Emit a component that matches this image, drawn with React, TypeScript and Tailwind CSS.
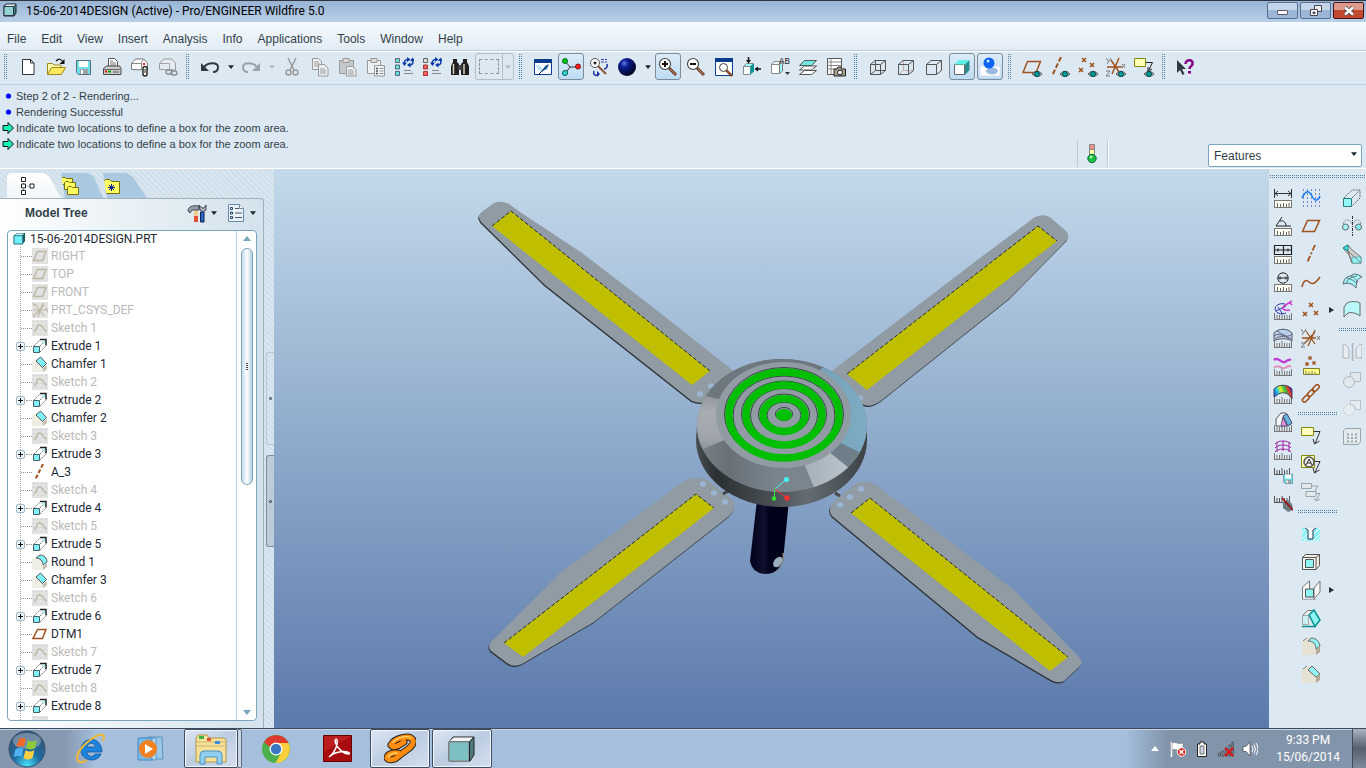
import React from "react";

type Art = React.ReactNode;

const INK = "#555555";
const RUST = "#a0521c";

const Eye = () => (
  <g>
    <path d="M10 17q5-5.500 10 0q-5 5-10 0z" fill="#c8c8c8" stroke="#555" strokeWidth="1" />
    <circle cx="15" cy="17" r="2.500" fill="#00a0a0" stroke="#064848" strokeWidth="1" />
  </g>
);

const Ruler = () => (
  <path d="M1.500 19v-6M4 19v-4M6.500 19v-4M9 19v-6M11.500 19v-4M14 19v-4M16.500 19v-4M18.500 19v-6M1 19.500h18" stroke="#777" fill="none" />
);

const RulerBox = () => (
  <g>
    <rect x="1.500" y="12.500" width="17" height="7" fill="#fffff4" stroke="#777" />
    <path d="M4.500 19v-4M7.500 19v-3M10.500 19v-4M13.500 19v-3M16 19v-4" stroke="#666" fill="none" />
  </g>
);

const Cross = ({ x, y, c = RUST, s = 2 }: { x: number; y: number; c?: string; s?: number }) => (
  <path d={`M${x - s} ${y - s}l${2 * s} ${2 * s}M${x + s} ${y - s}l${-2 * s} ${2 * s}`} stroke={c} strokeWidth="1.500" />
);

const Floppy = ({ t = "" }: { t?: string }) => (
  <g transform={t}>
    <path d="M2.500 3.500h14v14h-12l-2-2z" fill="#6fe0ea" stroke="#557078" />
    <rect x="5" y="4" width="9" height="6" fill="#fff" />
    <rect x="6" y="12" width="8" height="5" fill="#9aa4a8" />
    <rect x="7" y="13" width="2" height="4" fill="#fff" />
  </g>
);

const ListArt = ({ c }: { c: string }) => (
  <g>
    <path d="M1.500 1.500h4v4h-4z" fill={c === "r" ? "#ddd" : "#60e0e0"} stroke="#666" />
    <path d="M1.500 8h4v4h-4zM1.500 14.500h4v4h-4z" fill={c === "r" ? "#ff5c5c" : "#60e0e0"} stroke={c === "r" ? "#a33" : "#567"} />
    <path d="M10.500 7.500c-1-3 1-5 3-5M18.500 3c1 3 0 5-2.500 5" stroke="#0a3aa8" strokeWidth="1.500" fill="none" />
    <path d="M13 0l3.500 2.500-3.500 2.500zM8 5.500h5l-2.500 3.500zM16.500 5.500v5l-3.500-2.500zM16 4h5l-2.500-3.500z" fill="#0a3aa8" />
    <path d="M10 13.500h7M10 16.500h9" stroke="#8a8a8a" />
  </g>
);

const CubeLines = () => <path d="M2.500 7.500h10v10h-10zM2.500 7.500l4.500-4h10.500v10l-5 4M12.500 7.500l5-4" fill="none" stroke={INK} />;

const Magnifier = ({ sign }: { sign: string }) => (
  <g>
    <path d="M11 11l7 7" stroke="#6b3a24" strokeWidth="3" />
    <path d="M12 12l5.500 5.500" stroke="#d09070" strokeWidth="1" />
    <circle cx="7" cy="7" r="5.500" fill="#fff" stroke="#444" strokeWidth="1.200" />
    <path d={sign} stroke="#111" strokeWidth="2" />
  </g>
);

const art: Record<string, Art> = {
  new: <path d="M4.500 2.500h8l3.500 3.500v11.500h-11.500zM12.500 2.500v3.500h3.500" fill="#fff" stroke="#333" />,
  open: (
    <g>
      <path d="M1.500 17.500v-11h5l1.500 1.500h7v3" fill="#ffffb0" stroke="#a08820" />
      <path d="M1.500 17.500l4-7h14l-4 7z" fill="#ffe860" stroke="#a08820" />
      <path d="M10 4c3-3 5-2 7 1" stroke="#111" fill="none" strokeWidth="1.200" />
      <path d="M18.500 2v5h-5z" fill="#111" />
    </g>
  ),
  save: <Floppy />,
  print: (
    <g>
      <path d="M6.500 9.500v-8h6l3 3v5z" fill="#fff" stroke="#555" />
      <path d="M8 4h3M8 6h6M8 8h6" stroke="#777" />
      <path d="M1.500 11.500l3-2.500h13l1.500 2.500v6h-17.500z" fill="#ccc" stroke="#444" />
      <path d="M2 12.500h16" stroke="#666" />
      <path d="M3 14.500h2" stroke="#e00" strokeWidth="2" />
      <path d="M6 14.500h3" stroke="#0a0" strokeWidth="2" />
      <path d="M11 15h6" stroke="#555" />
    </g>
  ),
  mail: (
    <g>
      <path d="M1.500 12.500v-6l4-4.500h8l4 4v7z" fill="#fff" stroke="#777" />
      <path d="M1.500 6.500h10v6M11.500 6.500c0-3 2-4 3-4" stroke="#888" fill="none" />
      <path d="M13 6h2v2h-2z" fill="#e22" />
      <rect x="13" y="9.500" width="4" height="9.500" rx="2" fill="#fff" stroke="#222" strokeWidth="1.400" />
      <path d="M15 12v4" stroke="#222" />
    </g>
  ),
  maillink: (
    <g opacity="0.5">
      <path d="M1.500 12.500v-6l4-4.500h8l4 4v7z" fill="#eee" stroke="#555" />
      <path d="M1.500 6.500h10v6" stroke="#666" fill="none" />
      <rect x="8" y="13" width="6" height="4" rx="2" fill="none" stroke="#333" strokeWidth="1.300" />
      <rect x="13" y="14" width="6" height="4" rx="2" fill="none" stroke="#333" strokeWidth="1.300" />
    </g>
  ),
  undo: (
    <g>
      <path d="M4 10c4-5 14-5 14 0c0 3-2 5-5 5" fill="none" stroke="#2d3a44" strokeWidth="2" />
      <path d="M1 6v8h8z" fill="#2d3a44" />
    </g>
  ),
  redo: (
    <g>
      <path d="M16 10c-4-5-14-5-14 0c0 3 2 5 5 5" fill="none" stroke="#98a4ac" strokeWidth="2" />
      <path d="M19 6v8h-8z" fill="#98a4ac" />
    </g>
  ),
  cut: (
    <g fill="none" stroke="#999" strokeWidth="1.500">
      <path d="M6 1l6 12M14 1l-6 12" />
      <circle cx="6.500" cy="15.500" r="2.500" />
      <circle cx="13.500" cy="15.500" r="2.500" />
    </g>
  ),
  copy: (
    <g fill="#eef1f3" stroke="#999">
      <path d="M2.500 1.500h6l3 3v8h-9z" />
      <path d="M4 5h5M4 7h6M4 9h6" />
      <path d="M8.500 7.500h6l3.500 3.500v8h-9.500z" />
      <path d="M10 12h5M10 14h6M10 16h6" />
    </g>
  ),
  paste: (
    <g stroke="#999">
      <path d="M1.500 3.500h14v13h-14z" fill="#c4c9cc" />
      <path d="M5 1.500h6v4h-6z" fill="#ddd" />
      <path d="M8.500 9.500h6l3.500 3v6.500h-9.500z" fill="#eef1f3" />
      <path d="M10 13h5M10 15h6M10 17h6" />
    </g>
  ),
  pastespecial: (
    <g stroke="#999">
      <path d="M1.500 3.500h13v13h-13z" fill="#eef1f3" />
      <path d="M5 1.500h6v4h-6z" fill="#ddd" />
      <path d="M8.500 8.500h10v10.500h-10z" fill="#eef1f3" />
      <path d="M10 11.500h2M10 14h2M10 16.500h2" stroke="#555" strokeWidth="1.500" />
      <path d="M13.500 11.500h4M13.500 14h4M13.500 16.500h4" />
    </g>
  ),
  regen: <ListArt c="c" />,
  regenred: <ListArt c="r" />,
  find: (
    <g>
      <path d="M3 2h4v3l2 2v11h-8v-9l2-4zM13 2h4v3l2 4v9h-8v-11l2-2z" fill="#222" />
      <path d="M8 8h4v5h-4z" fill="#444" />
      <path d="M3.500 7v10M14 7v10" stroke="#d8d4c0" strokeWidth="1.500" />
    </g>
  ),
  sketchview: (
    <g>
      <path d="M1.500 2.500h17v15h-17z" fill="#fff" stroke="#0c3c8c" />
      <path d="M1 2h18v4h-18z" fill="#0c3c8c" />
      <path d="M3 8c5 0 7 3 7 8-2-1-6-4-7-8z" fill="#b8e4f6" />
      <path d="M8 15l4-6 4-2-2 5z" fill="#2a78d0" />
      <path d="M6 17l9-9" stroke="#123" />
    </g>
  ),
  spin: (
    <g>
      <path d="M4 4l5 6h7M9 10l-5 7" stroke="#333" fill="none" />
      <circle cx="4" cy="4" r="2.500" fill="#0c0" stroke="#063" />
      <circle cx="17" cy="9.500" r="2.500" fill="#f22" stroke="#811" />
      <circle cx="4" cy="16" r="2.500" fill="#3dd" stroke="#055" />
    </g>
  ),
  orient: (
    <g>
      <circle cx="6" cy="6" r="4.500" fill="#fff" stroke="#555" />
      <circle cx="6" cy="6" r="1.500" fill="#222" />
      <path d="M9 9l8 8" stroke="#8a5236" strokeWidth="2" />
      <path d="M12 2.500h6M12 5h6" stroke="#2838a8" strokeDasharray="3 1" />
      <path d="M18 7c1 3-1 5-3 5M5 14c-1 3 0 5 4 4" stroke="#1a2a98" strokeWidth="1.500" fill="none" />
      <path d="M8 14v6l3-3z" fill="#1a2a98" />
    </g>
  ),
  sphere: <circle cx="10" cy="10" r="9" fill="url(#navyball)" />,
  zoomin: <Magnifier sign="M7 4v6M4 7h6" />,
  zoomout: <Magnifier sign="M4 7h6" />,
  refit: (
    <g>
      <path d="M1.500 1.500h17v17h-17z" fill="#fff" stroke="#0c3c8c" />
      <path d="M1 1h18v4h-18z" fill="#0c3c8c" />
      <path d="M12 13l6 6" stroke="#8a4a2c" strokeWidth="2.500" />
      <circle cx="9.500" cy="10.500" r="4" fill="#fff" stroke="#444" />
    </g>
  ),
  reorient: (
    <g>
      <path d="M1.500 9.500h7v8h-7z" fill="#fff" stroke="#888" />
      <path d="M1.500 9.500l3-3h7l-3 3z" fill="#9ff" stroke="#888" />
      <path d="M8.500 9.500l3.500-3v8l-3.500 3z" fill="#099" />
      <path d="M6.500 0v4M19 12h-4" stroke="#111" strokeWidth="1.500" />
      <path d="M4 3h5l-2.500 3.500zM16 9.500v5l-3.500-2.500z" fill="#111" />
    </g>
  ),
  saved: (
    <g>
      <path d="M1.500 7.500h8v9h-8z" fill="#fff" stroke="#888" />
      <path d="M1.500 7.500l2.500-3h7l-1.500 3z" fill="#e8f8ff" stroke="#888" />
      <path d="M9.500 7.500l3-2.500v9l-3 2.500z" fill="#9ff" stroke="#777" />
      <text x="9" y="7" fontSize="9" fontFamily="Liberation Mono" fill="#222">AB</text>
      <path d="M15 15h5l-2.500 3z" fill="#333" />
    </g>
  ),
  layers: (
    <g stroke="#555">
      <path d="M1.500 17.500l5-4h12l-5 4z" fill="#fff" />
      <path d="M1.500 13l5-4h12l-5 4z" fill="#fff" />
      <path d="M1.500 8.500l5-5h12l-5 5z" fill="#70e8e0" />
    </g>
  ),
  viewmgr: (
    <g>
      <path d="M1.500 1.500h14v16h-14z" fill="#fff" stroke="#555" />
      <path d="M1.500 5h14M1.500 8.500h14M1.500 12h14M5 1.500v16" stroke="#888" />
      <path d="M8 12h3l1-2h3l1 2h3.500v7h-11.500z" fill="#aaa390" stroke="#222" />
      <circle cx="14" cy="15.500" r="2.500" fill="#eee" stroke="#111" />
    </g>
  ),
  wire: (
    <g>
      <CubeLines />
      <path d="M7.500 3.500v10h10M7.500 13.500l-5 4" stroke={INK} fill="none" />
    </g>
  ),
  hidden: (
    <g>
      <path d="M7.500 3.500v10h10M7.500 13.500l-5 4" stroke="#c6b0b0" fill="none" />
      <CubeLines />
    </g>
  ),
  nohidden: <CubeLines />,
  shade: (
    <g>
      <path d="M2.500 7.500h10v10h-10z" fill="#fff" stroke="#666" />
      <path d="M2.500 7.500l4-4.500h11l-4 4.500z" fill="#5ff0e8" />
      <path d="M13 7.500l4.500-4.500v10l-4.500 5z" fill="#2a8c8c" />
    </g>
  ),
  enhanced: (
    <g>
      <path d="M0 9h20v10h-20z" fill="#fff" stroke="#dde" />
      <ellipse cx="12" cy="14" rx="6" ry="3.500" fill="#9ab8e0" />
      <circle cx="9" cy="6" r="5.500" fill="#0a64f0" />
      <circle cx="8" cy="4" r="1.500" fill="#d0e8ff" />
    </g>
  ),
  dplane: (
    <g>
      <path d="M5.500 4.500h13l-4.500 11h-13z" fill="none" stroke={RUST} strokeWidth="1.500" />
      <Eye />
    </g>
  ),
  daxis: (
    <g>
      <path d="M11 0l-9 19" stroke={RUST} strokeWidth="2" strokeDasharray="5 2" />
      <Eye />
    </g>
  ),
  dpoint: (
    <g>
      <Cross x={6} y={3} />
      <Cross x={14} y={8} />
      <Cross x={3} y={13} />
      <Eye />
    </g>
  ),
  dcsys: (
    <g>
      <path d="M13 1l-7 16M1 10h15M5 3l8 12" stroke={RUST} strokeWidth="1.500" />
      <path d="M0 1l2 3M5 1l-4 6M0 14h4l-4 5h4M16 7l3 4M19 7l-3 4" stroke="#777" fill="none" />
      <Eye />
    </g>
  ),
  dnote: (
    <g>
      <path d="M.5 1.500h11v8h-11z" fill="#ffffb8" stroke="#888800" />
      <path d="M12 5.500h6.500l-4 8M14 10v4l4-2" stroke="#222" fill="none" />
      <Eye />
    </g>
  ),
  help: (
    <g>
      <path d="M1 3v13l3-3 2.500 5 2-1-2.500-5h4z" fill="#2d3a44" />
      <path d="M9.500 7c0-5 8-5 7 0c0 2-3 2.500-3 5" stroke="#850085" strokeWidth="2.500" fill="none" />
      <path d="M12 14h3v2.500h-3z" fill="#850085" />
    </g>
  ),
  mdist: (
    <g>
      <path d="M1.500 1v9M18.500 1v9M2 5.500h16M5 3l-3 2.500 3 2.500M15 3l3 2.500-3 2.500" stroke="#333" fill="none" />
      <RulerBox />
    </g>
  ),
  mangle: (
    <g>
      <path d="M9 1l-6 9h15M7 5c4-1 6 2 6 5" stroke="#222" fill="none" />
      <RulerBox />
    </g>
  ),
  marea: (
    <g>
      <path d="M1.500 1.500h17v9h-17zM2 6h17M10.500 1v10M5 4.500v3M15 4.500v3" stroke="#222" fill="none" strokeWidth="1.200" />
      <RulerBox />
    </g>
  ),
  mdiam: (
    <g>
      <circle cx="10" cy="6" r="5.200" fill="none" stroke="#222" />
      <path d="M5 6h10M7 4.500v3M13 4.500v3" stroke="#222" />
      <RulerBox />
    </g>
  ),
  manalysis: (
    <g>
      <Ruler />
      <path d="M12 4c-9-2-13 6-7 9c3 1 6 1 8 0M3 11l10-5M5 7l4 6" stroke="#2838a8" fill="none" />
      <path d="M19 1l-8 5c-3 2-1 5 6 4M16 2l3 3" stroke="#d03ad0" fill="none" strokeWidth="1.500" />
    </g>
  ),
  msurface: (
    <g>
      <Ruler />
      <path d="M1 13v-8c4-5 14-5 18 0v8c-4-3-14-3-18 0z" fill="#b8d0ec" stroke="#556" />
      <path d="M1 8c6-5 12 4 18-2M4 3c5 4 10 4 12 9M2 11c5-4 12-3 16 0" stroke="#667" fill="none" />
    </g>
  ),
  mcurve: (
    <g>
      <Ruler />
      <path d="M1 4c4-4 8 4 11 2s4-3 6-2" stroke="#c040d8" strokeWidth="2.500" fill="none" />
      <path d="M1 12c4-5 8 2 11 0s4-3 6-1" stroke="#e090b8" strokeWidth="2" fill="none" />
    </g>
  ),
  mcolor: (
    <g>
      <Ruler />
      <path d="M1 13v-8c4-5 14-5 18 0v10l-3-4c-4-3-8-3-12 0z" fill="url(#rainbow)" stroke="#445" />
    </g>
  ),
  mdraft: (
    <g>
      <Ruler />
      <path d="M3 14v-7l5-6h5l5 11-4 2z" fill="#f4f6f8" stroke="#556" />
      <path d="M8 14l2-9 4 9z" fill="#f090e8" stroke="#556" />
      <path d="M10 4l4-2 5 9-4 3z" fill="#68b8e0" stroke="#447" />
    </g>
  ),
  mmesh: (
    <g>
      <Ruler />
      <path d="M2 4c3-4 13-4 16 0M2 8c3-4 13-4 16 0M2 12c3-4 13-4 16 0M4 2v10M16 2v10M10 1v10" stroke="#a020a0" fill="none" />
    </g>
  ),
  msave: (
    <g>
      <path d="M1.500 6V0M4 6V2M6.500 6V2M9 6V0M11.500 6V2M14 6V2M16.500 6V0M1 6.500h9" stroke="#555" />
      <Floppy t="translate(9 4) scale(.65)" />
    </g>
  ),
  mdelete: (
    <g>
      <path d="M1.500 6V0M4 6V2M6.500 6V2M9 6V0M11.500 6V2M14 6V2M16.500 6V0M1 6.500h9" stroke="#555" />
      <path d="M10 6l5-2 4 4 1 6-5 2-5-4z" fill="#6a7a80" />
      <path d="M9 2l11 12" stroke="#a00000" strokeWidth="1.500" />
    </g>
  ),
  sketch: (
    <g>
      <path d="M2 2h17M2 6h17M2 10h17M2 14h17M2 18h17" stroke="#1a2a98" strokeDasharray="1 3" />
      <path d="M1 10c4-8 7-8 10-2s6 5 8 0" stroke="#1478f0" strokeWidth="1.500" fill="none" />
    </g>
  ),
  plane: <path d="M6.500 4.500h12l-5 11h-12z" fill="none" stroke={RUST} strokeWidth="1.500" />,
  axis: <path d="M14 1l-8 18" stroke={RUST} strokeWidth="1.800" strokeDasharray="6 2 2 2" />,
  curve: <path d="M1 15c1-6 4-8 7-5s6 2 11-5" stroke={RUST} strokeWidth="1.500" fill="none" />,
  points: (
    <g>
      <Cross x={10} y={5} />
      <Cross x={4} y={14} />
      <Cross x={15} y={13} />
    </g>
  ),
  csys: (
    <g>
      <path d="M14 2l-7 16M1 10h14M5 3l9 13M3 16l11-12" stroke={RUST} strokeWidth="1.300" />
      <path d="M0 1l2 3M5 1l-4 6M0 15h4l-4 4h4M16 8l3 4M19 8l-3 4" stroke="#777" fill="none" />
    </g>
  ),
  analysis: (
    <g>
      <Cross x={9} y={2} s={1.5} />
      <Cross x={6} y={8} s={1.5} />
      <Cross x={13} y={7} s={1.5} />
      <path d="M2.500 12.500h16v6h-16z" fill="#ffff80" stroke="#808030" />
      <path d="M5 19v-4M8 19v-3M11 19v-4M14 19v-3" stroke="#777" />
    </g>
  ),
  link: (
    <g fill="none" stroke={RUST} strokeWidth="1.500">
      <rect x="-3.500" y="-2" width="8" height="4" rx="2" transform="translate(14.500 4.500) rotate(-45)" />
      <rect x="-3.500" y="-2" width="8" height="4" rx="2" transform="translate(9.500 9.500) rotate(-45)" />
      <rect x="-3.500" y="-2" width="8" height="4" rx="2" transform="translate(4.500 15) rotate(-45)" />
    </g>
  ),
  note: (
    <g>
      <path d="M.5 1.500h12v8h-12z" fill="#ffffc0" stroke="#888800" />
      <path d="M13 5.500h6l-5 12M12 13l1.500 5 5-3" stroke="#333" fill="none" />
    </g>
  ),
  symbol: (
    <g>
      <path d="M.5 1.500h13v12h-13z" fill="#ffffc0" stroke="#888800" />
      <circle cx="8" cy="8" r="5" fill="#eee" stroke="#555" strokeWidth="1.500" />
      <path d="M5 11l3-6 3 6M6 9h4" stroke="#333" fill="none" />
      <path d="M14 7.500h5l-5 11M12 14l1.500 5 5-3" stroke="#333" fill="none" />
    </g>
  ),
  notes2: (
    <g fill="none" stroke="#9aa6ae">
      <path d="M.5 1.500h10v5h-10zM5 9.500h10v5h-10z" fill="#e2e8ec" />
      <path d="M11 4h6l-3 5M15 11.500h4l-4 7M13 16l2 3 4-2" />
    </g>
  ),
  hole: (
    <g>
      <path d="M1 4h18v13h-18z" fill="#8ff4f6" />
      <path d="M1 9l5-5M1 15l6-6M12 17l7-7M13 10l6-6M3 17l4-4M16 17l3-3" stroke="#fff" />
      <path d="M4 4l3 2v9h5v-9l3-2z" fill="#f4f8fa" />
      <path d="M4 4l3 2v9h5v-9l3-2" fill="none" stroke="#26365a" />
    </g>
  ),
  shell: (
    <g stroke="#555">
      <path d="M1.500 5.500l3-3h14v11l-3.500 4h-13.500z" fill="#f0ece0" />
      <path d="M1.500 5.500h13.500v12h-13.500zM15 5.500l3.500-3" fill="#f8f6f0" />
      <path d="M4.500 7.500h8v8h-8z" fill="#8ff4f4" />
    </g>
  ),
  rib: (
    <g>
      <path d="M1.500 19v-12l7-6v12M13 19v-11l6-7v11z" fill="#f8f8f4" stroke="#777" />
      <path d="M4.500 9h8v8h-8z" fill="#8ff4f4" stroke="#555" />
      <path d="M1.500 19.500h13" stroke="#777" strokeDasharray="1 1" />
    </g>
  ),
  draft: (
    <g>
      <path d="M1.500 7.500l5-5h6l-5 5z" fill="#eee" stroke="#777" />
      <path d="M1.500 7.500h6v9h-6z" fill="#c8f0f0" stroke="#aaa" />
      <path d="M8 7l5-5 6 10-5 6.500z" fill="#8ff4f4" stroke="#089090" strokeWidth="1.500" />
      <path d="M1 18.500h13" stroke="#089090" strokeWidth="1.500" />
    </g>
  ),
  round: (
    <g>
      <path d="M1 6l5-4h6l7 8v6l-4 3h-14z" fill="#e6e2d4" />
      <path d="M7 5l3-3c5 0 8 3 9 8l-4 3c0-5-3-8-8-8z" fill="#90f4f4" stroke="#666" />
      <path d="M15 13l4-3v6l-4 3z" fill="#b0aa98" />
      <path d="M2 5l4-3" stroke="#888" />
    </g>
  ),
  chamfer: (
    <g>
      <path d="M1 6l5-4h5l8 8v6l-4 3h-14z" fill="#e6e2d4" />
      <path d="M7 6l4-4 8 8-4 3z" fill="#90f4f4" stroke="#666" />
      <path d="M15 13l4-3v6l-4 3z" fill="#b0aa98" />
      <path d="M2 5l4-3" stroke="#888" />
    </g>
  ),
  extrude: (
    <g>
      <path d="M1.500 10.500h8v8h-8z" fill="#90f8f8" stroke="#2a7a7a" />
      <path d="M2 10l8-8h8v8l-8 8M10 10l8-8" stroke="#666" strokeDasharray="2 1" fill="none" />
    </g>
  ),
  revolve: (
    <g>
      <path d="M10.500 0v20" stroke="#333" strokeDasharray="3 1 1 1" />
      <circle cx="3.500" cy="11" r="3" fill="#a0f8f8" stroke="#666" />
      <circle cx="16.500" cy="11" r="3" fill="#80f0f0" stroke="#666" />
      <path d="M1 8c2-6 7-5 9 0M19 8c-2-6-6-5-8 0" stroke="#888" fill="none" strokeDasharray="2 1" />
    </g>
  ),
  blend: (
    <g>
      <path d="M1 4l5-3 4 5 9 7v6h-9l-3-8z" fill="#d4d4d0" stroke="#777" />
      <path d="M1 4l5-3v6z" fill="#50e8e8" stroke="#088" />
      <path d="M10 19v-6h9v6z" fill="#90f8f8" stroke="#6aa" />
      <path d="M6 7l4 12M6 7l13 12" stroke="#777" />
    </g>
  ),
  sweep: (
    <g>
      <path d="M1 12c1-5 4-8 8-8l3-2c2 0 6 1 8 3-4 1-6 5-6 11-3-4-8-6-13-4z" fill="#a4f6f6" stroke="#567" />
      <path d="M9 4c4 2 6 4 6 7M5 6c4 1 8 3 10 6M4 12c1-4 4-7 11-8" stroke="#567" fill="none" strokeWidth=".8" />
    </g>
  ),
  boundary: <path d="M2 17v-10l3-4c4-2 9-2 13 0v13c-4-3-8-4-12-3z" fill="#b8f8f8" stroke="#666" />,
  mirror: (
    <g stroke="#aab4ba" fill="#e6ecf0">
      <path d="M10.500 1v18" strokeWidth="1.500" />
      <path d="M1 2c4 1 6 3 6 8v6h-6zM20 2c-4 1-6 3-6 8v6h6z" />
    </g>
  ),
  merge: (
    <g stroke="#b0bac0" fill="#e2e9ee">
      <path d="M8.500 2.500h10v9h-10z" />
      <circle cx="7" cy="12" r="5.500" />
    </g>
  ),
  trim: (
    <g stroke="#b8c2c8" fill="#e6ecf0">
      <circle cx="7" cy="12" r="5.500" stroke="#d2dade" />
      <path d="M8.500 2.500h10v9h-5c0-4-2-5-5-5z" />
    </g>
  ),
  pattern: (
    <g>
      <path d="M1.500 4.500l2-2h15v13l-2 3h-15z" fill="#e4ebef" stroke="#9aa6ae" />
      <path d="M5 8.500h10M5 12h10M5 15.500h10" stroke="#9aa6ae" strokeWidth="2" strokeDasharray="2 2" />
    </g>
  ),
};

function Icon({ name }: { name: string }) {
  return (
    <svg viewBox="0 0 20 20" className="h-5 w-5 shrink-0" aria-hidden="true">
      {art[name]}
    </svg>
  );
}

function Caret({ faint, light }: { faint?: boolean; light?: boolean }) {
  return (
    <svg viewBox="0 0 8 5" className="h-[4px] w-[6px]" aria-hidden="true">
      <path d="M0 0h8l-4 5z" fill={faint ? "#b4bcc2" : light ? "#fff" : "#1c2830"} />
    </svg>
  );
}

function Tool({ name, label, active }: { name: string; label: string; active?: boolean }) {
  return (
    <button
      aria-label={label}
      className={
        active
          ? "mx-px flex h-[27px] w-[26px] items-center justify-center rounded-[3px] border border-[#7c8c9a] bg-gradient-to-b from-[#dcebf7] to-[#bcdcf4]"
          : "flex h-7 w-7 items-center justify-center"
      }
    >
      <Icon name={name} />
    </button>
  );
}

function DropCaret({ label, faint }: { label: string; faint?: boolean }) {
  return (
    <button aria-label={label} className="flex h-7 w-[13px] items-center justify-center">
      <Caret faint={faint} />
    </button>
  );
}

const DOTS = "bg-[linear-gradient(#dce9f3_50%,transparent_50%),linear-gradient(90deg,#dce9f3_50%,#4f7f9f_50%)] bg-[size:2px_2px]";

const Grip = () => (
  <div className="w-[14px] pl-[3px]">
    <div className={`h-[27px] w-[4px] ${DOTS}`} />
  </div>
);

const Rule = () => (
  <div className="h-[14px] self-stretch pt-[3px]">
    <div className={`h-[4px] ${DOTS}`} />
  </div>
);

type ToolDef = [string, string];

const fileTools: ToolDef[] = [["new", "New"], ["open", "Open"], ["save", "Save"], ["print", "Print"], ["mail", "Send as attachment"], ["maillink", "Send as link"]];
const editTools: ToolDef[] = [["cut", "Cut"], ["copy", "Copy"], ["paste", "Paste"], ["pastespecial", "Paste special"], ["regen", "Regenerate"], ["regenred", "Regenerate manager"], ["find", "Find"]];
const viewTools: ToolDef[] = [["zoomin", "Zoom in"], ["zoomout", "Zoom out"], ["refit", "Refit"], ["reorient", "Reorient"], ["saved", "Saved views"], ["layers", "Layers"], ["viewmgr", "View manager"]];
const displayTools: ToolDef[] = [["wire", "Wireframe"], ["hidden", "Hidden line"], ["nohidden", "No hidden"], ["shade", "Shading"], ["enhanced", "Enhanced realism"]];
const datumTools: ToolDef[] = [["dplane", "Plane display"], ["daxis", "Axis display"], ["dpoint", "Point display"], ["dcsys", "Csys display"], ["dnote", "Annotation display"]];

function Toolbar() {
  const row = (t: ToolDef[], active: string[] = []) => t.map(([n, l]) => <Tool key={n} name={n} label={l} active={active.includes(n)} />);
  return (
    <div role="toolbar" className="flex h-[35px] shrink-0 items-center border-y border-[#bccddd] bg-[#dce9f3] pb-[2px] shadow-[inset_0_1px_0_#fff,0_1px_0_#fff]">
      <Grip />
      {row(fileTools)}
      <Grip />
      <Tool name="undo" label="Undo" />
      <DropCaret label="Undo list" />
      <Tool name="redo" label="Redo" />
      <DropCaret label="Redo list" faint />
      {row(editTools)}
      <div className="w-[41px] pl-px">
        <button aria-label="Select box" className="flex h-[27px] w-[39px] items-center rounded-[3px] border border-[#b4bec6]">
          <span className="flex h-full w-[27px] items-center justify-center border-r border-[#b4bec6]">
            <span className="h-[15px] w-5 border border-dashed border-[#8a949c]" />
          </span>
          <span className="flex flex-1 justify-center">
            <Caret faint />
          </span>
        </button>
      </div>
      <Grip />
      <Tool name="sketchview" label="Repaint" />
      <Tool name="spin" label="Spin center" active />
      <Tool name="orient" label="Orient mode" />
      <Tool name="sphere" label="Appearance gallery" />
      <DropCaret label="Appearance list" />
      {row(viewTools, ["zoomin"])}
      <Grip />
      {row(displayTools, ["shade", "enhanced"])}
      <Grip />
      {row(datumTools)}
      <Grip />
      <Tool name="help" label="Context help" />
    </div>
  );
}

const menus = ["File", "Edit", "View", "Insert", "Analysis", "Info", "Applications", "Tools", "Window", "Help"];

function TitleBar() {
  return (
    <header className="flex h-[22px] shrink-0 items-start border-t border-[#2f3440] bg-gradient-to-b from-[#98b4d4] to-[#b9cfe8] pl-[3px] pr-[2px]">
      <svg viewBox="0 0 14 14" className="mt-[2px] h-[14px] w-[14px]" aria-hidden="true">
        <path d="M1 3l2-2h10v9l-2 3h-10z" fill="#3a8080" stroke="#222" />
        <path d="M1 3.500h9.500v9h-9.500z" fill="#90d4d4" stroke="#334" />
        <path d="M2 3l1.500-1.500h9l-2 1.500z" fill="#e8f4f4" />
      </svg>
      <h1 className="flex-1 pl-[9px] font-[Roboto,sans-serif] text-[12px] leading-5 text-black">15-06-2014DESIGN (Active) - Pro/ENGINEER Wildfire 5.0</h1>
      <div className="flex gap-[2px] pt-px">
        <button aria-label="Minimize" className="flex h-[17px] w-[31px] items-center justify-center rounded-[2px] border border-[#5a6f90] bg-gradient-to-b from-[#c4d5ea] from-50% to-[#9cb6d6] to-50%">
          <span className="mt-1 h-[5px] w-[11px] rounded-[1px] border border-[#556] bg-white" />
        </button>
        <button aria-label="Restore" className="flex h-[17px] w-[31px] items-center justify-center rounded-[2px] border border-[#5a6f90] bg-gradient-to-b from-[#c4d5ea] from-50% to-[#9cb6d6] to-50%">
          <svg viewBox="0 0 12 11" className="h-[11px] w-3" aria-hidden="true">
            <path d="M4.500.5h7v6h-7z" fill="#eee" stroke="#445" />
            <path d="M.5 4.500h7v6h-7z" fill="#fff" stroke="#445" />
            <path d="M3 7h2v1.500h-2z" fill="#9cb6d6" stroke="#445" />
          </svg>
        </button>
        <button aria-label="Close" className="flex h-[17px] w-[31px] items-center justify-center rounded-[2px] border border-[#4a1418] bg-gradient-to-b from-[#dd9a8c] from-50% to-[#c04a30] to-50%">
          <svg viewBox="0 0 12 10" className="h-[10px] w-3" aria-hidden="true">
            <path d="M2 1.500l8 7M10 1.500l-8 7" stroke="#445" strokeWidth="4" />
            <path d="M2 1.500l8 7M10 1.500l-8 7" stroke="#fff" strokeWidth="2.500" />
          </svg>
        </button>
      </div>
    </header>
  );
}

function Messages() {
  const lines: [boolean, string][] = [
    [false, "Step 2 of 2 - Rendering..."],
    [false, "Rendering Successful"],
    [true, "Indicate two locations to define a box for the zoom area."],
    [true, "Indicate two locations to define a box for the zoom area."],
  ];
  return (
    <section className="flex h-[84px] shrink-0 border-b border-white bg-[#dce9f3]">
      <ul className="flex-1 pl-[2px] pt-[3px]">
        {lines.map(([arrow, text], i) => (
          <li key={i} className="flex h-4 items-center gap-[2px] text-[11px] text-[#333f48]">
            <svg viewBox="0 0 12 12" className="h-3 w-3 shrink-0" aria-hidden="true">
              {arrow ? <path d="M1 3.500h5v-3l5.500 5.500-5.500 5.500v-3h-5z" fill="#10f0b8" stroke="#111" /> : <circle cx="6.500" cy="6" r="2.600" fill="#0000ff" />}
            </svg>
            {text}
          </li>
        ))}
      </ul>
      <div className="flex items-end gap-[100px] pb-px pr-1">
        <div className="flex h-[26px] w-[31px] items-center justify-center border-x border-[#b9c8d4] pr-px shadow-[1px_0_0_#fff]">
          <svg viewBox="0 0 12 20" className="h-5 w-3" aria-hidden="true">
            <path d="M3.500.5h5v5h-5z" fill="#f09090" stroke="#888" />
            <path d="M3.500 5.500h5v5h-5z" fill="#ffffa0" stroke="#888" />
            <circle cx="6" cy="14.500" r="4.200" fill="#20c040" stroke="#064" />
            <circle cx="5" cy="13" r="1.300" fill="#c0ffc0" />
          </svg>
        </div>
        <div className="relative">
          <select aria-label="Selection filter" className="h-[23px] w-[154px] appearance-none rounded-[2px] border border-[#7ba4bd] bg-white pl-[5px] text-[12px] text-[#333f48]">
            <option>Features</option>
            <option>Geometry</option>
          </select>
          <span className="pointer-events-none absolute right-[5px] top-[9px] flex">
            <Caret />
          </span>
        </div>
      </div>
    </section>
  );
}

type Kind = "plane" | "csys" | "sketch" | "extrude" | "chamfer" | "axis" | "round" | "datum";

const nodes: [Kind, string][] = [
  ["plane", "RIGHT"], ["plane", "TOP"], ["plane", "FRONT"], ["csys", "PRT_CSYS_DEF"], ["sketch", "Sketch 1"],
  ["extrude", "Extrude 1"], ["chamfer", "Chamfer 1"], ["sketch", "Sketch 2"], ["extrude", "Extrude 2"], ["chamfer", "Chamfer 2"],
  ["sketch", "Sketch 3"], ["extrude", "Extrude 3"], ["axis", "A_3"], ["sketch", "Sketch 4"], ["extrude", "Extrude 4"],
  ["sketch", "Sketch 5"], ["extrude", "Extrude 5"], ["round", "Round 1"], ["chamfer", "Chamfer 3"], ["sketch", "Sketch 6"],
  ["extrude", "Extrude 6"], ["datum", "DTM1"], ["sketch", "Sketch 7"], ["extrude", "Extrude 7"], ["sketch", "Sketch 8"],
  ["extrude", "Extrude 8"], ["sketch", ""],
];

const Dots = () => <path d="M1 1.500h15M1 5.500h15M1 9.500h15M1 13.500h15" stroke="#c4c4c4" strokeDasharray="1 3" />;

const nodeArt: Record<Kind, Art> = {
  plane: (
    <g>
      <path d="M0 0h16v16h-16z" fill="#e2e2e2" />
      <path d="M5.500 3.500h8.500l-3.500 9h-9z" fill="none" stroke="#bdb9a4" strokeWidth="1.500" />
    </g>
  ),
  csys: (
    <g>
      <path d="M0 0h16v16h-16z" fill="#e2e2e2" />
      <path d="M11 1l-5 14M1 8h13M3 2l9 12M3 13l9-10M14 6l2 4M1 1l2 3M1 12l2 3" stroke="#bdb9a4" strokeWidth="1.200" />
    </g>
  ),
  sketch: (
    <g>
      <path d="M0 0h16v16h-16z" fill="#e2e2e2" />
      <Dots />
      <path d="M2 12c3-1 2-7 5-7s4 2 5 4 1 2 3 2" fill="none" stroke="#bdb9a4" strokeWidth="1.500" />
    </g>
  ),
  extrude: (
    <g>
      <path d="M1.500 8.500h6v6h-6z" fill="#80f4fa" stroke="#476068" />
      <path d="M2 8l6-6M8 14l6-6M8 8l5-5" stroke="#777" strokeDasharray="2 1" />
      <path d="M8 1.500h6v6" fill="none" stroke="#222" strokeWidth="1.500" />
      <path d="M9 3h4v3z" fill="#a0f0f0" />
    </g>
  ),
  chamfer: (
    <g>
      <path d="M0 5l4-2h4l3 9v4h-11z" fill="#efeee4" />
      <path d="M4 5l4.500-4 6 6.500-4 4z" fill="#80f4fa" stroke="#555" />
      <path d="M11 12l4-3v4l-4 3z" fill="#c4c0b0" />
    </g>
  ),
  axis: <path d="M11 0l-8 16" stroke={RUST} strokeWidth="2" strokeDasharray="4 2" />,
  round: (
    <g>
      <path d="M0 5l4-2h4l3 9v4h-11z" fill="#efeee4" />
      <path d="M4 4l4-3c4 0 7 3 7 7l-4 3c0-4-3-7-7-7z" fill="#80f4fa" stroke="#555" />
      <path d="M11 12l4-3v4l-4 3z" fill="#c4c0b0" />
    </g>
  ),
  datum: <path d="M5.500 3.500h8.500l-3.500 9h-9.500z" fill="none" stroke={RUST} strokeWidth="1.500" />,
};

function TreeNode({ kind, label }: { kind: Kind; label: string }) {
  const hidden = kind === "plane" || kind === "csys" || kind === "sketch";
  const expandable = kind === "extrude";
  return (
    <li className="flex h-[18px] shrink-0 items-center">
      <div className="flex w-6 items-center pl-2">
        {expandable && (
          <button aria-label={`Expand ${label}`} className="flex h-[9px] w-[9px] shrink-0 items-center justify-center rounded-[2px] border border-[#9fb8c8] bg-[#eef5fa]">
            <svg viewBox="0 0 5 5" className="h-[5px] w-[5px]" aria-hidden="true">
              <path d="M0 2.500h5M2.500 0v5" stroke="#111" />
            </svg>
          </button>
        )}
        <span className={expandable ? "ml-px flex-1 border-t border-dotted border-[#909090]" : "ml-[5px] flex-1 border-t border-dotted border-[#909090]"} />
      </div>
      <svg viewBox="0 0 16 16" className="h-4 w-4 shrink-0" aria-hidden="true">
        {nodeArt[kind]}
      </svg>
      <span className={hidden ? "pl-[3px] text-[#b9b9b9]" : "pl-[3px] text-[#1d2a34]"}>{label}</span>
    </li>
  );
}

function ModelTree() {
  return (
    <aside className="flex w-[274px] shrink-0 bg-[repeating-linear-gradient(45deg,#cfe0eb_0px,#cfe0eb_2px,#d9e6ef_2px,#d9e6ef_4px)]">
      <div className="flex min-w-0 flex-1 flex-col">
        <div role="tablist" className="flex h-[29px] shrink-0 items-end pl-[7px]">
          <button role="tab" aria-selected="true" aria-label="Model tree" className="flex h-[25px] w-[54px] items-center bg-gradient-to-b from-white to-[#f1f6fa] pl-[14px] [clip-path:polygon(0_3px,3px_0,36px_0,42px_3px,100%_100%,0_100%)]">
            <svg viewBox="0 0 14 20" className="h-5 w-[14px]" aria-hidden="true">
              <path d="M2.500 1v18M2.500 10h8" stroke="#777" strokeDasharray="1 1" />
              <path d="M.5 1.500h4v4h-4zM.5 8h4v4h-4zM.5 14.500h4v4h-4zM9 8h4v4h-4z" fill="#fff" stroke="#222" />
            </svg>
          </button>
          <button role="tab" aria-selected="false" aria-label="Folder browser" className="flex h-[25px] w-[42px] items-center bg-[#aac9e0] pl-0 [clip-path:polygon(0_0,27px_0,33px_4px,100%_100%,4px_100%)]">
            <svg viewBox="0 0 19 19" className="h-[19px] w-[19px]" aria-hidden="true">
              <g fill="#ffff60" stroke="#777010">
                <path d="M.5 8.500v-6l1-1h3l1 1h6v6z" />
                <path d="M3.500 13.500v-7l1-1h3l1 1h6v7z" />
                <path d="M6.500 18.500v-7l1-1h3l1 1h6v7z" />
              </g>
            </svg>
          </button>
          <button role="tab" aria-selected="false" aria-label="Favorites" className="flex h-[25px] w-[44px] items-center bg-[#aac9e0] pl-0 [clip-path:polygon(0_0,24px_0,30px_4px,100%_100%,4px_100%)]">
            <svg viewBox="0 0 17 16" className="h-4 w-[17px]" aria-hidden="true">
              <path d="M.5 15.500v-12l2-2h4l2 2h8v12z" fill="#ffff60" stroke="#777010" />
              <path d="M8.500 6v7M5 9.500h7M6 7l5 5M11 7l-5 5" stroke="#102090" />
            </svg>
          </button>
        </div>
        <div className="mr-[10px] flex min-h-0 flex-1 flex-col rounded-tr-[4px] border-r border-t border-[#a2b0ba] bg-gradient-to-r from-white to-[#d3e2ec] to-100% pb-[7px] pl-[7px] pr-[6px]">
          <div className="flex h-[31px] shrink-0 items-center pb-1 pl-[18px]">
            <h2 className="flex-1 text-[12px] font-bold text-[#333f48]">Model Tree</h2>
            <button aria-label="Settings" className="flex w-10 items-center gap-[4px]">
              <svg viewBox="0 0 20 20" className="h-5 w-5" aria-hidden="true">
                <path d="M7 6h4v13h-4z" fill="#e05030" />
                <path d="M7 6h4v7h-4z" fill="#f0d090" />
                <path d="M1 8c0-4 4-6 11-5v4h-7l-2 3z" fill="#8fa0ac" stroke="#445" />
                <path d="M13.500 9h3.500v10h-3.500z" fill="#2868d0" stroke="#124" />
                <path d="M12 2l1 5 3 2 3-2v-5l-2 3h-2z" fill="#aab4bc" stroke="#445" />
              </svg>
              <Caret />
            </button>
            <button aria-label="Show" className="flex w-[30px] items-center gap-[5px]">
              <svg viewBox="0 0 18 20" className="h-5 w-[18px]" aria-hidden="true">
                <path d="M1.500 1.500h11l4 4v13h-15z" fill="#e8f2fa" stroke="#6a8aa8" />
                <path d="M12.500 1.500v4h4" fill="#fff" stroke="#6a8aa8" />
                <path d="M8 5.500h4M8 10h7M8 14.500h7" stroke="#556" />
                <path d="M3.500 4.500h2v2h-2zM3.500 9h2v2h-2zM3.500 13.500h2v2h-2z" fill="#fff" stroke="#246" />
              </svg>
              <Caret />
            </button>
          </div>
          <div className="flex min-h-0 flex-1 overflow-hidden rounded-[4px] border border-[#7ba4bd] bg-white">
            <div className="min-h-0 flex-1 overflow-hidden border-r border-[#b5d0e0] font-[Roboto,sans-serif] text-[12px] leading-[18px]">
              <div className="flex h-4 items-center gap-1 pb-px pl-[5px] text-[#1d2a34]">
                <svg viewBox="0 0 14 14" className="h-[13px] w-[13px]" aria-hidden="true">
                  <path d="M1 4l3-3h9v9l-3 3h-9z" fill="#1d5c64" />
                  <path d="M1 4h9.500v9h-9.500z" fill="#70f0f8" stroke="#267" />
                  <path d="M2 3.500l2-2h8l-2 2z" fill="#c0fafa" />
                </svg>
                15-06-2014DESIGN.PRT
              </div>
              <ul className="ml-0 flex flex-col bg-[linear-gradient(#a0a0a0_50%,transparent_50%)] bg-[size:1px_2px] bg-[position:12px_0] bg-repeat-y">
                {nodes.map(([k, l]) => (
                  <TreeNode key={l} kind={k} label={l} />
                ))}
              </ul>
            </div>
            <div className="flex w-[19px] shrink-0 flex-col items-center py-[5px]">
              <svg viewBox="0 0 8 5" className="h-[5px] w-2" aria-hidden="true"><path d="M0 5h8l-4-5z" fill="#7ba4bd" /></svg>
              <div className="flex w-full flex-1 flex-col items-center py-[7px]">
                <div className="flex h-[52%] w-3 items-center justify-center rounded-full border border-[#7ba4bd] bg-gradient-to-r from-[#c4dceb] via-white to-[#b4d0e2]">
                  <span className="h-[7px] w-[2px] bg-[repeating-linear-gradient(#444_0px,#444_1px,transparent_1px,transparent_2px)]" />
                </div>
              </div>
              <svg viewBox="0 0 8 5" className="h-[5px] w-2" aria-hidden="true"><path d="M0 0h8l-4 5z" fill="#7ba4bd" /></svg>
            </div>
          </div>
        </div>
      </div>
      <div className="-ml-[9px] flex w-[9px] flex-col items-end gap-[10px] pt-[183px]">
        <button aria-label="Collapse browser" className="flex h-[93px] w-2 items-center justify-center rounded-l-[3px] border border-r-0 border-[#b4c8d8]">
          <span className="h-[3px] w-[3px] rounded-full border border-[#222]" />
        </button>
        <button aria-label="Collapse navigator" className="flex h-[92px] w-2 items-center justify-center rounded-l-[3px] border border-r-0 border-[#7f8f9c] bg-[#bccdda]">
          <span className="h-[3px] w-[3px] rounded-full border border-[#222]" />
        </button>
      </div>
    </aside>
  );
}

function Holes({ pts }: { pts: [number, number][] }) {
  return (
    <>
      {pts.map(([x, y]) => (
        <ellipse key={x} cx={x} cy={y} rx="3.200" ry="2.700" fill="#9bb4d2" />
      ))}
    </>
  );
}

function FanModel() {
  const grey = "#909ba4";
  const blades = [
    "M479 218Q478 215 483 211L494 203Q500 200 509 204L520 212L582 253L650 305L735 372L712 400Q702 405 692 401L545 285L481 222Z",
    "M1035 217Q1045 213 1051 218L1066 231Q1070 235 1067 240L1010 298L882 400Q870 409 862 404L828 374L980 258Z",
    "M684 481Q695 475 708 480L733 500Q738 508 728 517L594 622L522 664Q514 668 507 663L491 651Q487 647 491 642L560 573Z",
    "M856 483Q867 479 876 485L1014 590L1079 657Q1084 663 1079 667L1064 681Q1058 684 1051 680L978 637L832 516Q827 509 833 503Z",
  ];
  return (
    <svg viewBox="274 169 995 559" preserveAspectRatio="xMidYMid meet" className="h-full w-full" role="img" aria-label="Ceiling fan model">
      <defs>
        <clipPath id="dome"><ellipse cx="782" cy="425.500" rx="85" ry="66.500" /></clipPath>
        <linearGradient id="side" x1="0" x2="1">
          <stop offset="0" stopColor="#4a4f52" /><stop offset=".12" stopColor="#2b3032" /><stop offset=".45" stopColor="#4a4f54" /><stop offset=".65" stopColor="#646c72" /><stop offset="1" stopColor="#3c4246" />
        </linearGradient>
        <linearGradient id="cone" x1="0" x2="1">
          <stop offset="0" stopColor="#7c868c" /><stop offset=".2" stopColor="#687178" /><stop offset=".45" stopColor="#7a848c" /><stop offset="1" stopColor="#7c878f" />
        </linearGradient>
        <linearGradient id="gleam" x1="0" x2="0" y1="0" y2="1">
          <stop offset="0" stopColor="#70787e" /><stop offset=".4" stopColor="#a8adb3" /><stop offset=".65" stopColor="#a0a6ac" /><stop offset="1" stopColor="#6c757b" />
        </linearGradient>
        <linearGradient id="glass" x1="0" x2="1">
          <stop offset="0" stopColor="#6f9bb0" /><stop offset="1" stopColor="#82b2cb" />
        </linearGradient>
        <linearGradient id="shine" x1="0" x2="1">
          <stop offset="0" stopColor="#848e96" /><stop offset=".3" stopColor="#a8b2ba" /><stop offset=".8" stopColor="#bcc6ce" /><stop offset="1" stopColor="#98a4ac" />
        </linearGradient>
        <linearGradient id="rod" x1="0" x2="1">
          <stop offset="0" stopColor="#00001a" /><stop offset=".35" stopColor="#10102e" /><stop offset=".5" stopColor="#02021c" /><stop offset="1" stopColor="#000018" />
        </linearGradient>
      </defs>
      {blades.map((d) => (
        <g key={d}>
          <path d={d} fill="#2c3236" transform="translate(-.6 1.200)" />
          <path d={d} fill={grey} />
        </g>
      ))}
      <g fill="#bfbf00">
        <path d="M511 211L710 371L692 385L492 226Z" />
        <path d="M1038 226L1057 241L867 390L847 374Z" />
        <path d="M696 494L714 508L523 657L504 643Z" />
        <path d="M870 498L1068 657L1050 671L851 513Z" />
      </g>
      <g fill="none" stroke="#26292a" strokeDasharray="4 2">
        <path d="M492 226L511 211L710 371" />
        <path d="M847 374L1038 226L1057 241" />
        <path d="M504 643L696 494L714 508" />
        <path d="M851 513L870 498L1068 657" />
      </g>
      <Holes pts={[[700, 394], [711, 386], [860, 398], [703, 484], [714, 493], [725, 502], [861, 489], [850, 497], [840, 505]]} />
      <path d="M723 494l5-3M840 496l-5-3" stroke="#444" strokeWidth="3" />
      <path d="M757 500L750 561Q752 573 765 574Q778 574 783 561L789 500Z" fill="url(#rod)" />
      <ellipse cx="778" cy="562" rx="4" ry="6" transform="rotate(40 778 562)" fill="#9bacbe" />
      <path d="M778 567q7-5 5-14" stroke="#888880" strokeWidth="1.500" fill="none" />
      <path d="M697 425L696 440A85.500 67 0 0 0 867 440V425Z" fill="url(#side)" />
      <g clipPath="url(#dome)">
        <path d="M690 350h190v150h-190z" fill="url(#cone)" />
        <path d="M783 415L650 372L650 472Z" fill="url(#gleam)" />
        <path d="M783 415L650 382L690 340L870 340L828 374Z" fill="#6e777e" />
        <path d="M783 415L822 368L900 340L900 484Z" fill="url(#glass)" />
        <path d="M783 415L880 462L862 488Z" fill="#6f7f8a" />
        <path d="M783 415L870 485L826 515Z" fill="url(#shine)" />
      </g>
      <ellipse cx="783.500" cy="415" rx="67.500" ry="53" fill={grey} />
      <g fill="none" stroke="#3a4248" strokeWidth="1">
        <ellipse cx="784" cy="414" rx="59.500" ry="46.500" />
        <ellipse cx="784" cy="416" rx="51" ry="40" />
        <ellipse cx="784" cy="414" rx="42.500" ry="33" />
        <ellipse cx="784" cy="415.500" rx="33.500" ry="27" />
        <ellipse cx="784" cy="414" rx="25.500" ry="20" />
        <ellipse cx="784" cy="415.500" rx="17" ry="13.500" />
        <ellipse cx="784" cy="414" rx="8.500" ry="6.500" />
      </g>
      <g fill="none" stroke="#00be00">
        <ellipse cx="784" cy="415" rx="55" ry="43" strokeWidth="7.500" />
        <ellipse cx="784" cy="415" rx="38" ry="30" strokeWidth="7.500" />
        <ellipse cx="784" cy="415" rx="21" ry="16.500" strokeWidth="7.500" />
      </g>
      <ellipse cx="784" cy="415" rx="8" ry="6" fill="#00be00" />
      <path d="M775 489L786 479.500" stroke="#40f4f4" />
      <path d="M775 489L787 498" stroke="#f03030" />
      <path d="M774.500 489V498" stroke="#30e830" />
      <circle cx="786.500" cy="479.500" r="2.500" fill="#40f4f4" />
      <circle cx="787" cy="498" r="2.700" fill="#f03030" />
      <circle cx="774" cy="498.500" r="2.200" fill="#30e830" />
    </svg>
  );
}

const colA = ["mdist", "mangle", "marea", "mdiam", "manalysis", "msurface", "mcurve", "mcolor", "mdraft", "mmesh", "msave", "mdelete"];
const colB = [
  ["sketch", "plane", "axis", "curve", "points+", "csys", "analysis", "link"],
  ["note", "symbol", "notes2"],
  ["hole", "shell", "rib+", "draft", "round", "chamfer"],
];
const colC = [["extrude", "revolve", "blend", "sweep", "boundary"], ["mirror", "merge", "trim", "pattern"]];

function FeatureBar() {
  return (
    <aside className="flex w-[97px] shrink-0 flex-col bg-[#dce9f3]">
      <div className="h-[15px] shrink-0 pt-[5px]">
        <div className={`h-[4px] ${DOTS}`} />
      </div>
      <div className="flex items-start">
        <div className="flex w-7 flex-col">
          {colA.map((n) => <Tool key={n} name={n} label={n} />)}
        </div>
        <div className="flex w-[41px] flex-col">
          {colB.map((group, i) => (
            <React.Fragment key={i}>
              {i > 0 && <Rule />}
              {group.map((n) => (
                <div key={n} className="flex items-center">
                  <Tool name={n.replace("+", "")} label={n.replace("+", "")} />
                  {n.endsWith("+") && (
                    <button aria-label={`More ${n.replace("+", "")}`} className="flex h-7 flex-1 items-center pl-1">
                      <svg viewBox="0 0 5 6" className="h-[6px] w-[5px]" aria-hidden="true"><path d="M0 0l5 3-5 3z" fill="#222f38" /></svg>
                    </button>
                  )}
                </div>
              ))}
            </React.Fragment>
          ))}
        </div>
        <div className="flex w-7 flex-col">
          {colC.map((group, i) => (
            <React.Fragment key={i}>
              {i > 0 && <Rule />}
              {group.map((n) => <Tool key={n} name={n} label={n} />)}
            </React.Fragment>
          ))}
        </div>
      </div>
    </aside>
  );
}

function Task({ label, active, stacked, children }: { label: string; active?: boolean; stacked?: boolean; children: React.ReactNode }) {
  const frame = "rounded-[2px] border border-[#3c4c60] bg-gradient-to-br from-[#dde7f3] via-[#bccde2] to-[#d3dfee] shadow-[inset_0_0_0_1px_#f2f6fb]";
  return (
    <div className="flex h-full w-[60px]">
      <button aria-label={label} className={active ? `flex h-full flex-1 items-center justify-center ${frame}` : "flex h-full flex-1 items-center justify-center"}>
        <svg viewBox="0 0 32 32" className="h-8 w-8" aria-hidden="true">
          {children}
        </svg>
      </button>
      {stacked && <span className="mr-[2px] h-full w-[4px] rounded-r-[2px] border border-l-0 border-[#5c6c80] bg-[#c8d6e6]" />}
    </div>
  );
}

function Taskbar() {
  return (
    <footer className="flex h-10 shrink-0 border-t border-[#3c4a5c] bg-[linear-gradient(90deg,#8596ad_0px,#8799b0_66px,#a5bfdd_96px,#a5bfdd_calc(100%-240px),#8294aa_calc(100%-200px),#8294aa_100%)] shadow-[inset_0_1px_0_#c6d6e8]">
      <button aria-label="Start" className="flex w-[60px] shrink-0 items-center pl-2">
        <svg viewBox="0 0 38 38" className="h-[38px] w-[38px]" aria-hidden="true">
          <circle cx="19" cy="19" r="18" fill="url(#orb)" stroke="#35506c" />
          <ellipse cx="19" cy="11" rx="14" ry="8" fill="#fff" opacity=".3" />
          <path d="M11 9q4-2 7 0l-2 8q-3-2-8 0z" fill="#f0682c" />
          <path d="M20 10q4 3 9 0l-2 8q-4 3-9 0z" fill="#90c83c" />
          <path d="M7.500 19q4-2 8 0l-2 8q-3-2-8 0z" fill="#50b0f0" />
          <path d="M17.500 20q4 3 9 0l-2 8q-5 3-9 0z" fill="#ffd040" />
        </svg>
      </button>
      <nav className="flex flex-1 gap-[2px]">
        <Task label="Internet Explorer">
          <path d="M27 21c-3 9-20 8-20-4c0-14 21-15 21 2h-15c0 5 6 6 8 2zM13 14h8.500c-1-5-7.500-5-8.500 0z" fill="#1c84dc" stroke="#1658a0" strokeWidth=".8" fillRule="evenodd" />
          <path d="M4 28c-4-5 4-15 12-21s14-7 14-3c0 2 0 2-1 4" fill="none" stroke="#f0b830" strokeWidth="2" />
          <path d="M4 28c2 2 6 1 9-1" fill="none" stroke="#f0b830" strokeWidth="2" />
        </Task>
        <Task label="Windows Media Player">
          <path d="M12 4h14l1 22h-15z" fill="#9cc8e8" stroke="#5a94c0" />
          <path d="M6 5h14v22l-14-1z" fill="#b8dcf4" stroke="#5a94c0" />
          <path d="M2 5h14v22h-14z" fill="#78b8e4" stroke="#4a88bc" />
          <circle cx="12" cy="16" r="9" fill="#f08020" />
          <path d="M9 11l8 5-8 5z" fill="#fff" />
        </Task>
        <Task label="Windows Explorer" active stacked>
          <path d="M1 5l2-3h9l2 3h15l2 2v22h-30z" fill="#f6e09a" stroke="#b49848" />
          <path d="M1 9h30M1 13h30" stroke="#d0b468" />
          <path d="M4 3h5v3h-5z" fill="#3cb44a" />
          <path d="M12 5h4v3h-4z" fill="#e05030" />
          <path d="M20 8h5v3h-5z" fill="#3c8ce0" />
          <path d="M5 31v-9q0-4 4-4h14q4 0 4 4v9h-5v-7h-12v7z" fill="#90cff0" stroke="#4a94c4" />
        </Task>
        <Task label="Google Chrome">
          <circle cx="16" cy="16" r="14" fill="#4db04a" />
          <path d="M4 9a14 14 0 0 1 24.500 1h-12.500a6.500 6.500 0 0 0-6 4z" fill="#dd3b2e" />
          <path d="M28.500 10a14 14 0 0 1-13 20l6-11a6.500 6.500 0 0 0-5-9z" fill="#fcd03c" />
          <circle cx="16" cy="16" r="6.500" fill="#fff" />
          <circle cx="16" cy="16" r="5.200" fill="#3b78c4" />
        </Task>
        <Task label="Adobe Reader">
          <path d="M1.500 2.500h28v26h-28z" fill="#a80c10" stroke="#600" />
          <path d="M2 3h27l-27 16z" fill="#c82828" opacity=".6" />
          <path d="M7 24c6-4 9-13 8-17c-1-2-3 0-1 4c2 5 8 10 12 10s-1-4-9-2c-5 1-8 3-10 5z" fill="none" stroke="#fff" strokeWidth="1.500" />
        </Task>
        <Task label="Pro/ENGINEER" active>
          <path d="M7 12C10 5 26 1 29 7C31 14 20 18 15 23C11 27 5 28 3 25C3 21 10 19 14 20M7 12C9 16 16 12 20 9" fill="none" stroke="#222" strokeWidth="7" strokeLinecap="round" strokeLinejoin="round" />
          <path d="M7 12C10 5 26 1 29 7C31 14 20 18 15 23C11 27 5 28 3 25C3 21 10 19 14 20M7 12C9 16 16 12 20 9" fill="none" stroke="#ff8c10" strokeWidth="5" strokeLinecap="round" strokeLinejoin="round" />
          <path d="M9 9C14 4 23 2 27 5M4 24C6 21 10 20 13 20" fill="none" stroke="#ffd060" strokeWidth="1.500" strokeLinecap="round" />
        </Task>
        <Task label="15-06-2014DESIGN" active>
          <path d="M3 9l4-5h21v18l-4 6h-21z" fill="#4c7a7c" stroke="#222" />
          <path d="M3 9h20v19h-20z" fill="#7cc0c4" />
          <path d="M3 9h20v19h-20z" fill="none" stroke="#888" />
          <path d="M4 8l3.500-3.500h19.500l-3.500 3.500z" fill="#f4f4f4" />
          <path d="M23.500 28v-19l4.500-5" fill="none" stroke="#222" />
        </Task>
      </nav>
      <div className="flex items-center gap-[8px] pr-3">
        <button aria-label="Show hidden icons" className="mr-[3px]">
          <svg viewBox="0 0 8 5" className="h-[5px] w-2" aria-hidden="true"><path d="M0 5h8l-4-5z" fill="#fff" /></svg>
        </button>
        <svg viewBox="0 0 16 16" className="h-4 w-4" aria-label="Action center">
          <path d="M1.500 1v15" stroke="#fff" strokeWidth="1.500" />
          <path d="M2 2c4-2 5 2 11 0v7c-5 2-6-2-11 0z" fill="#fff" stroke="#667" strokeWidth=".5" />
          <circle cx="11.500" cy="11" r="4.300" fill="#d82c20" stroke="#fff" />
          <path d="M9.500 9l4 4M13.500 9l-4 4" stroke="#fff" strokeWidth="1.300" />
        </svg>
        <svg viewBox="0 0 16 16" className="h-4 w-4" aria-label="Battery">
          <path d="M6 1h4v2h2.500v12.500h-9v-12.500h2.500z" fill="#fff" stroke="#222" />
          <path d="M6 5h4v8h-4z" fill="#ccd6e0" stroke="#555" strokeWidth=".8" />
        </svg>
        <svg viewBox="0 0 16 16" className="h-4 w-4" aria-label="Network unavailable">
          <path d="M.5 12h2v3h-2zM4 10h2v5h-2zM7.500 7h2v8h-2zM11 4h2v11h-2zM14 1h1.500v14h-1.500z" fill="#8a98a8" stroke="#444" strokeWidth=".7" />
          <path d="M7 7l8 8M15 7l-8 8" stroke="#e01010" strokeWidth="2" />
        </svg>
        <svg viewBox="0 0 16 16" className="h-4 w-4" aria-label="Volume">
          <path d="M1 5.500h3l4-4.500v14l-4-4.500h-3z" fill="#fff" stroke="#444" strokeWidth=".7" />
          <path d="M10 5q2 3 0 6M12 3.500q3 4.500 0 9M14 2q4 6 0 12" stroke="#fff" fill="none" />
        </svg>
        <time className="ml-[10px] block text-center font-[Roboto,sans-serif] text-[12px] leading-[17px] text-white">
          9:33 PM
          <br />
          15/06/2014
        </time>
      </div>
      <button aria-label="Show desktop" className="w-[14px] border-l border-[#3c4a5c] bg-gradient-to-b from-[#a9b4c0] via-[#55616e] to-[#7e8b9a]" />
    </footer>
  );
}

export default function App() {
  return (
    <div className="flex h-screen flex-col overflow-hidden bg-[#dce9f3] font-['Liberation_Sans',sans-serif]">
      <svg className="absolute h-0 w-0" aria-hidden="true">
        <defs>
          <radialGradient id="navyball" cx=".35" cy=".3" r=".75">
            <stop offset="0" stopColor="#5a7ae0" /><stop offset=".3" stopColor="#0c1c90" /><stop offset="1" stopColor="#000018" />
          </radialGradient>
          <linearGradient id="rainbow" x1="0" x2="1" y1=".7" y2=".4">
            <stop offset="0" stopColor="#2040f0" /><stop offset=".25" stopColor="#20d0e0" /><stop offset=".45" stopColor="#f0e820" /><stop offset=".65" stopColor="#30c850" /><stop offset=".85" stopColor="#f03020" /><stop offset="1" stopColor="#3030c0" />
          </linearGradient>
          <radialGradient id="orb" cx=".5" cy=".95" r=".8">
            <stop offset="0" stopColor="#4ce0f8" /><stop offset=".5" stopColor="#1a6aa0" /><stop offset="1" stopColor="#34587c" />
          </radialGradient>
        </defs>
      </svg>
      <TitleBar />
      <nav className="flex h-7 shrink-0 items-center gap-px bg-gradient-to-b from-[#f4fafd] to-[#e3ecf5] pb-px pt-[6px]">
        {menus.map((m) => (
          <button key={m} className="px-[7px] text-[12px] text-[#333f48]">{m}</button>
        ))}
      </nav>
      <Toolbar />
      <Messages />
      <div className="flex min-h-0 flex-1">
        <ModelTree />
        <main className="min-w-0 flex-1 bg-gradient-to-b from-[#c3d9ea] to-[#5c7aab]">
          <FanModel />
        </main>
        <FeatureBar />
      </div>
      <Taskbar />
    </div>
  );
}
